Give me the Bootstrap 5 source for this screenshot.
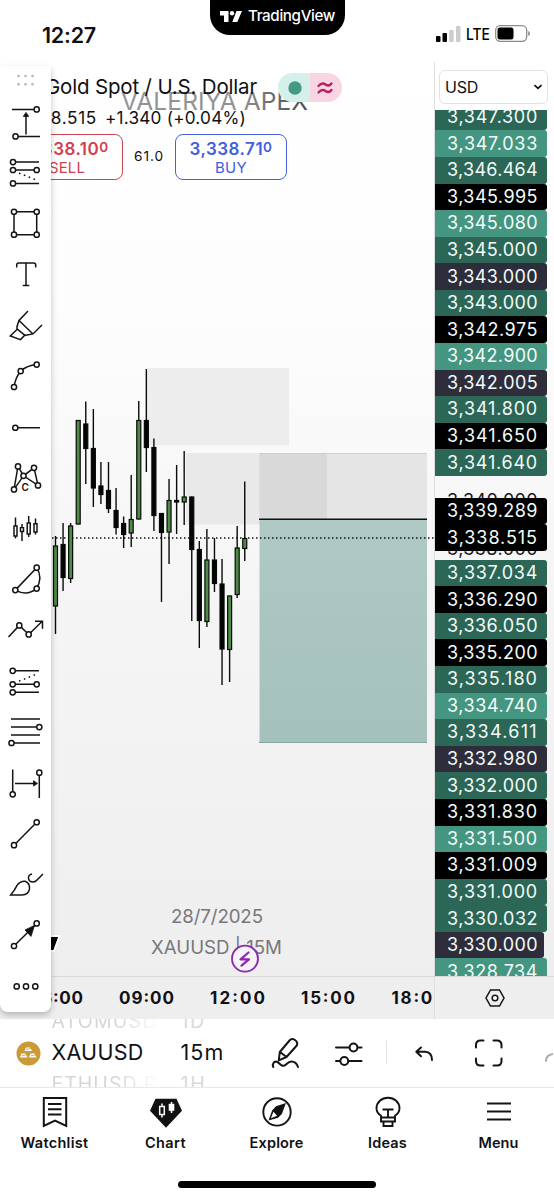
<!DOCTYPE html>
<html lang="en">
<head>
<meta charset="utf-8">
<meta name="viewport" content="width=device-width, initial-scale=1">
<title>XAUUSD chart</title>
<link href="https://cdn.jsdelivr.net/npm/bootstrap@5.3.0/dist/css/bootstrap.min.css" rel="stylesheet">
<style>
body{font-family:Inter,"Liberation Sans",sans-serif;color:#101014;background:#fff;width:554px;height:1199px;overflow:hidden;line-height:1}
svg{display:block;flex:none}
.ln{fill:none;stroke:#141416;stroke-width:1.5}
.ln circle,.ln .box{fill:#fff}
span[data-w]{display:inline-block;white-space:nowrap}
.status{height:62px;padding:5px 23px 0 42px}
.clock{font-size:21.5px;font-weight:600;width:168px;margin-top:-2px}
.notch{width:135px;height:35px;border-radius:0 0 20px 20px;background:#000;color:#fff;font-size:15.2px;font-weight:500;gap:6px;margin-top:-5px;padding-bottom:3px}
.signal{gap:5px;padding-top:5px}
.net{font-size:15.5px;font-weight:500;width:24px}
.workspace{height:957px;background:linear-gradient(#fff 0,#fdfdfd 25%,#f5f5f5 55%,#efefef 90%,#eee)}
.pane{width:434px;height:957px}
.canvas{position:absolute;left:0;top:0}
.legend{padding:10px 0 0 45px;height:130px}
.name{font-size:20.5px;height:30px}
.pill{width:64px;height:29px;border-radius:15px;background:linear-gradient(90deg,#d5f0ea 50%,#f8d5e2 50%);margin-left:21px}
.quote{font-size:17.2px;height:31px;margin-left:-33px;gap:8px}
.quotes{margin-left:-34px;gap:11px;margin-top:1px}
.deal{width:112px;height:46px;border:1.5px solid #cf4650;border-radius:8px;color:#d2404b;font-size:15px;line-height:19px;background:#fff;padding:3px 0 0;margin:0}
.deal b{font-size:17px;font-weight:600;display:block;height:18px;line-height:18px}
.tick{font-size:13.5px;position:relative;top:-3px}
.deal.buy{border-color:#4463dc;color:#3f60dd}
.spread{font-size:13.7px;width:30px}
.axis{width:120px;height:957px;border-left:1px solid #dedede}
.unit{height:34px;width:109px;margin:8px 0 0 4px;border:1px solid #e2e2e6;border-radius:6px;background:#fff;font-size:16px;padding:0 4px 0 5px}
.ladder{height:866px;margin-top:6px;overflow:hidden}
.rung{height:26.58px;width:112px;border-radius:0 3px 3px 0;color:#f4fbf9;font-size:18px;padding-left:12px;display:flex;align-items:center;position:relative}
.rung:first-child{margin-top:-6.2px}
.gd{background:#2b6656}.gl{background:#449681}.bk{background:#000}.nv{background:#2d2d3b}
.short{width:109px}
.free{color:#17171b;background:none;z-index:0}
.over{z-index:1}
.gear{height:43px;border-top:1px solid #d8d8d8}
.tools{position:absolute;left:0;top:4px;width:51px;height:946px;background:#fff;border-radius:0 0 8px 8px;box-shadow:0 3px 6px rgba(0,0,0,.24);z-index:3}
.bar{height:69px;border-bottom:1px solid #e8e8e8;padding-left:15.5px;overflow:hidden}
.wheel{height:69px;display:flex;flex-direction:column;align-items:flex-start;justify-content:center;overflow:hidden;font-size:21.5px;gap:11px;width:83px;padding-left:23px}
.wheel i{font-style:normal;font-size:19.5px;color:#d9d9d9;white-space:nowrap}
.wheel.sym{width:106px;margin-left:11px;padding-left:0}
.sym i{background:linear-gradient(90deg,#d4d4d4 60%,#fff);-webkit-background-clip:text;color:transparent}
.tabs a{width:20%;font-size:14.5px;font-weight:600;color:#101014;text-decoration:none;gap:8px}
.tabs{height:93px;padding-top:8px;margin-left:-1px}
.home{width:198px;height:7px;border-radius:4px;background:#000}
</style>
<script src="https://cdn.jsdelivr.net/npm/bootstrap@5.3.0/dist/js/bootstrap.bundle.min.js"></script>
</head>
<body>
<header class="status d-flex align-items-start">
  <div class="clock pt-3 mt-1"><span data-w="54">12:27</span></div>
  <div class="notch d-flex align-items-center justify-content-center">
    <svg width="22" height="11" viewBox="0 0 22 11" fill="#fff"><path d="M0 0h8.500v11H4V4.400H0zM16.500 0H22l-4.700 11h-5z"/><circle cx="12" cy="2.200" r="2.200"/></svg>
    <span data-w="87">TradingView</span>
  </div>
  <div class="signal d-flex align-items-center ms-auto pt-3 mt-1">
    <svg width="25" height="16" viewBox="0 0 25 16"><rect y="10" width="4.500" height="6" rx="1"/><rect x="6.500" y="7" width="4.500" height="9" rx="1"/><rect x="13.200" y="4" width="4.500" height="12" rx="1" fill="#ccc"/><rect x="20" width="4.500" height="16" rx="1" fill="#ccc"/></svg>
    <svg class="net" width="24" height="16" viewBox="0 0 24 16"><text x="0" y="14" font-size="16.500" textLength="24" lengthAdjust="spacingAndGlyphs">LTE</text></svg>
    <svg width="36" height="17" viewBox="0 0 36 17"><rect x=".7" y=".7" width="31" height="15.600" rx="4.500" fill="none" stroke="#8c8c8c" stroke-width="1.300"/><rect x="2.500" y="2.500" width="16" height="12" rx="2.500"/><path d="M33.200 6v5q1.800-.8 1.800-2.500T33.200 6" fill="#888"/></svg>
  </div>
</header>

<main class="workspace d-flex position-relative">
  <section class="pane position-relative overflow-hidden">
    <svg class="canvas" id="chart" width="434" height="957" viewBox="0 62 434 957" font-family="Inter">
      <defs><linearGradient id="wm"><stop offset=".64" stop-color="#929295"/><stop offset=".8" stop-color="#6d6d71"/><stop offset="1" stop-color="#4b4b50"/></linearGradient>
      <linearGradient id="gain" x2="0" y2="1"><stop stop-color="#afc9c5"/><stop offset="1" stop-color="#a5c1bb"/></linearGradient></defs>
      <path d="M147 368h142v77.500H147z" fill="#ededed"/>
      <path d="M186 453h141v71.500H186z" fill="#e9e9e9"/>
      <path d="M259.500 453H427v66H259.500z" fill="#e5e5e6"/>
      <path d="M259.500 453H327v66h-67.500z" fill="#d9d9da"/>
      <path d="M259.500 453.500H427" stroke="#cfcfcf"/>
      <path d="M259.500 519H427v223.500H259.500z" fill="url(#gain)"/><path d="M259 742.500h168" stroke="#86a5a0"/>
      <path d="M52 538h382" stroke="#111" stroke-width="1.300" stroke-dasharray="1.500 2.500"/>
      <path d="M259 519.200h168" stroke="#111" stroke-width="1.600"/>
      <g id="candles"></g>
      <g fill="#77777b" font-size="18.700"><text x="171" y="922.500" textLength="92">28/7/2025</text><text x="151" y="954" textLength="131">XAUUSD | 15M</text></g>
      <circle cx="245" cy="958.700" r="13" fill="#f6f3f7" stroke="#8a2bab" stroke-width="1.800"/>
      <path d="M248.500 952.500l-8 6.800h8.500l-7.500 6.400" fill="none" stroke="#8a2bab" stroke-width="2.200" stroke-linejoin="round" stroke-linecap="round"/>
      <path d="M45 936h14.500l-5.500 15h-9z" stroke="#fff" stroke-width="2"/>
      <path d="M0 976.500h434" stroke="#d8d8d8"/>
      <g font-size="17" font-weight="700" fill="#111116"><text x="29" y="1003.500" textLength="54">06:00</text><text x="119" y="1003.500" textLength="55">09:00</text><text x="210" y="1003.500" textLength="55">12:00</text><text x="301" y="1003.500" textLength="54">15:00</text><text x="391.500" y="1003.500" textLength="54">18:00</text></g>
      <text x="121" y="110" font-size="24.500" textLength="187" fill="url(#wm)">VALERIYA APEX</text>
    </svg>
    <div class="legend position-relative">
      <div class="name d-flex align-items-center"><span data-w="212">Gold Spot / U.S. Dollar</span>
        <div class="pill d-flex align-items-center"><svg width="64" height="29"><circle cx="17" cy="15" r="6.700" fill="#439a84"/><path d="M40.500 13q3.500-4 7-1.500t6-1M40.500 19.500q3.500-4 7-1.500t6-1" fill="none" stroke="#b6245f" stroke-width="2.300" stroke-linecap="round"/></svg></div>
      </div>
      <div class="quote d-flex align-items-center"><span data-w="85">3,338.515</span><span data-w="141">+1.340 (+0.04%)</span></div>
      <div class="quotes d-flex align-items-center">
        <button class="deal text-center"><b><span data-w="83">3,338.10<span class="tick">0</span></span></b><span data-w="36">SELL</span></button>
        <span class="spread" data-w="30">61.0</span>
        <button class="deal buy text-center"><b><span data-w="83">3,338.71<span class="tick">0</span></span></b><span data-w="32">BUY</span></button>
      </div>
    </div>
  </section>

  <aside class="axis d-flex flex-column">
    <div class="unit d-flex align-items-center justify-content-between"><span data-w="33">USD</span><svg width="10" height="6" viewBox="0 0 10 6"><path d="M1.500 1.200L5 4.300l3.500-3.100" fill="none" stroke="#111" stroke-width="1.700"/></svg></div>
    <div class="ladder" id="ladder"></div>
    <div class="gear d-flex align-items-center justify-content-center"><svg width="20" height="18" viewBox="0 0 20 18" class="ln"><path d="M5.500 1h9L19 9l-4.500 8h-9L1 9z"/><circle cx="10" cy="9" r="2.800"/></svg></div>
  </aside>

  <nav class="tools" id="tools">
    <svg width="51" height="30.570" viewBox="0 66 51 30.570" fill="#b5b5b8"><g id="grip"><circle cx="18.500" cy="76" r="1.300"/><circle cx="25.500" cy="76" r="1.300"/><circle cx="32.500" cy="76" r="1.300"/></g><use href="#grip" y="8.300"/></svg>
  </nav>
</main>

<div class="bar d-flex align-items-center">
  <svg width="25" height="25" viewBox="0 0 25 25"><circle cx="12.500" cy="12.500" r="12" fill="#c99a35"/><g fill="#fff"><path d="M10 6.500h4l2 3.500H8.500zM5.500 12.500h4l2 4H4zM14.500 12.500h4l2 4H13z"/></g><path d="M10 8.500l4.500-1M5.500 14.800l4.500-1M15 14.800l4.500-1" stroke="#c99a35" stroke-width=".8"/></svg>
  <div class="wheel sym"><i><span data-w="106">ATOMUSD</span></i><span data-w="92">XAUUSD</span><i><span data-w="106">ETHUSD P</span></i></div>
  <div class="wheel"><i><span data-w="25">1D</span></i><span data-w="44">15m</span><i><span data-w="26">1H</span></i></div>
  <svg width="312" height="69" viewBox="242 1019 312 69" class="ln" stroke-linecap="round" stroke-linejoin="round">
    <g style="stroke-width:2">
      <path d="M279.800 1060.300l1-8.300 9.700-11.500q2.200-2.600 5.500-.5t1.800 5.500L287.500 1057zM281 1052l6.500 5M274.300 1067c-1.500-3.500 1-6 3.500-5.200 3 1 4 4.500 7 4 3-.6 3.700-4.300 7.500-4.300 3.500 0 5.700 2.300 6.700 5.500"/>
      <path d="M337 1047.500h13.500M358.500 1047.500h4M337 1061h4M349.500 1061h13"/><circle cx="354.500" cy="1047.500" r="3.900"/><circle cx="345.300" cy="1061" r="3.900"/>
      <path d="M422 1047.500l-4.700 4.300 4.700 4.500M418 1051.800h8q7 .5 7 8.200"/>
      <path d="M477 1047.500v-2.500q0-4.500 4.500-4.500h3M494.500 1040.500h3.500q4.500 0 4.500 4.500v2.500M502.500 1058.500v2.500q0 4.500-4.500 4.500h-3.500M484.500 1065.500h-3q-4.500 0-4.500-4.500v-2.500"/>
    </g>
    <path d="M387.500 1041v23" style="stroke:#e2e2e2;stroke-width:1"/>
    <path d="M547 1061q0-6 7-7" style="stroke:#aaa;stroke-width:2"/>
  </svg>
</div>

<footer>
  <nav class="tabs d-flex">
    <a class="d-flex flex-column align-items-center" href="#"><svg width="32" height="32" viewBox="39 1096 32 32" class="ln"><path style="stroke-width:2" d="M43.800 1098h22.400v28l-11.200-5.500-11.200 5.500zM48 1104h13.500M48 1109.200h13.500M48 1114.500h13.500"/></svg><span data-w="68">Watchlist</span></a>
    <a class="d-flex flex-column align-items-center" href="#"><svg width="32" height="32" viewBox="150.500 1096 32 32"><path d="M156 1098.700h21l5.500 12-16 17-16-17z" fill="#111"/><path d="M162.500 1103.500v3m0 8v3M172 1102v11" stroke="#fff" stroke-width="1.500"/><path d="M160.200 1106.500h4.600v8h-4.600z" fill="#111" stroke="#fff" stroke-width="1.500"/><path d="M169.200 1103.800h5.600v7h-5.600z" fill="#fff"/></svg><span data-w="41">Chart</span></a>
    <a class="d-flex flex-column align-items-center" href="#"><svg width="32" height="32" viewBox="260.300 1096 32 32" class="ln"><circle cx="276.300" cy="1111.900" r="13.700" style="stroke-width:1.900"/><path d="M284 1104.200l-3.500 9.500-3.500 3.500-8 2.200 3.200-8.700 3.500-3.700z" style="fill:#111"/><path d="M270.200 1118.300l2.500-6.500 3.700 4z" style="fill:#fff;stroke:none"/></svg><span data-w="54">Explore</span></a>
    <a class="d-flex flex-column align-items-center" href="#"><svg width="32" height="32" viewBox="371.500 1096 32 32" class="ln"><path style="stroke-width:1.900" d="M380.500 1117.500v-1.800q-4.500-3-4.500-7.500a11.500 10.500 0 0 1 23 0q0 4.500-4.500 7.500v1.800zM380.500 1117.500v4h14v-4M383 1122v4h9v-4M382 1109.500h11M387.500 1109.500v8"/></svg><span data-w="39">Ideas</span></a>
    <a class="d-flex flex-column align-items-center" href="#"><svg width="32" height="32" viewBox="482 1096 32 32" class="ln"><path style="stroke-width:1.900" d="M486 1103.500h24M486 1111.500h24M486 1119.500h24"/></svg><span data-w="40">Menu</span></a>
  </nav>
  <div class="home mx-auto"></div>
</footer>

<script>
// high, body top, body bottom, low, rising
const candles=[[536,545.5,606.500,634,1],[523,544,578,591,0],[523,525.5,579,583,1],[420,420,524.500,524.500,1],[401.500,423.500,449,484,0],[409,448,488.500,507,0],[462,485.500,495,504,0],[462,490,509,513,0],[488,510,528,534.500,0],[516.500,523,535,548,0],[475,519,533.500,547,1],[401,420,519.500,519.500,1],[369,420,448,472,0],[438.500,447,516,531,0],[513,513,533,602,0],[479,500,532.500,564,1],[465,500,502.500,534,0],[451,496.500,502.500,525,1],[496.500,496.500,550,621,0],[541,549,621,648,0],[529,559.500,622,627,1],[538,559.500,584,592,0],[559,583.500,649.500,685,0],[595.500,595.500,650,682,1],[526,547.500,595,598,1],[481.500,538,549,561,1]];
document.getElementById('candles').innerHTML=candles.map(([h,t,b,l,up],i)=>{
  const x=55.5+i*7.57;
  return `<path d="M${x} ${h}V${l}" stroke="#0a0a0a" stroke-width="1.4"/><rect x="${x-2}" y="${t+.5}" width="4" height="${b-t-1}" fill="${up?'#4f8a46':'#050505'}" stroke="#050a05" stroke-width="1.200"/>`}).join('');

const rungs='gd 347.300,gl 347.033,gd 346.464,bk 345.995,gl 345.080,gd 345.000,nv 343.000,gd 343.000,bk 342.975,gl 342.900,nv 342.005,gd 341.800,bk 341.650,gd 341.640,f1 340.000,bk 339.289,bk 338.515,f2 338.000,gd 337.034,bk 336.290,gd 336.050,bk 335.200,gd 335.180,gl 334.740,gd 334.611,nv 332.980,gd 332.000,bk 331.830,gl 331.500,bk 331.009,gd 331.000,gd 330.032,sh 330.000,gl 328.734';
document.getElementById('ladder').innerHTML=rungs.split(',').map(r=>{
  const [k,p]=r.split(' ');
  const cls={f1:'free',f2:'free',sh:'nv short'}[k]||k+' over';
  const m={f1:'margin:11.500px 0 -16.200px',f2:'margin:-15.300px 0 -2.500px'}[k]||'';
  return `<div class="rung ${cls}" style="${m}"><span data-w="91">3,${p}</span></div>`}).join('');

// drawing tools, each centred on y = 0
const c=(x,y)=>`<circle cx="${x}" cy="${y}" r="2.6"/>`, p=(d,a='')=>`<path d="${d}" ${a}/>`;
const dots='stroke-dasharray="1.600 3.600"', solid='fill="#111" stroke-width=".8"';
const tools=[
 p('M12-13h22M18 14h22M26 12V-8')+p('M23.300-6l2.700-4 2.700 4z',solid)+c(36.7,-13)+c(15.5,14),
 p('M13-10.400h26M13-2.400h24M13 11h26')+p('M19 .7l19 7.500',dots)+c(13,-10.4)+c(13,-2.4)+c(36.7,-2.4)+c(13,11),
 p('M14-11.700h22.700v23H14z')+c(14,-11.7)+c(36.7,-11.7)+c(14,11.3)+c(36.7,11.3),
 p('M16.700-7v-2.500q0-2 2-2h15q2 0 2 2V-7M26-11.500V11M22.700 11h6.600'),
 p('M28-14.500L19-5l-2 6v3L10.300 10.500l10.200 3.700 4-4.200 8.500-1.500L42-.5M19-5L33 8.500M17 3.500l8 6.500'),
 p('M14 10.600Q15.500 1 20.700-5.400 27-11 36.700-11.900')+c(14,10.6)+c(20.7,-5.4)+c(36.7,-11.9),
 p('M18 .3h22')+c(15.3,.3),
 p('M18-12L14 11 23.500-2.600zM34-10.600L38 7 23.500-2.600z')+c(18,-12)+c(34,-10.6)+c(23.500,-2.6)+c(14,11)+c(38,7)+'<text x="21.500" y="13" font-size="10" font-weight="600" fill="#111" stroke="none">C</text>',
 p('M15.500-11V10M22-4.500V12.500M28.700-12.500V8.500M35.500-10V6')+p('M14-2.500h3v10h-3zM20.500-.8h3v4h-3zM27.200-5.500h3v11h-3zM34-4.800h3V3.500h-3z','class="box"'),
 p('M15.300 10.700L36.700-11.800Q43-2 36.700 9.200 27 17 15.300 10.700')+c(36.7,-11.8)+c(15.3,10.7)+c(36.7,9.2),
 p('M8.500 6.500L19.300-5l9.400 9L42-9M35-9.200h7.500v7.500')+c(19.3,-5)+c(28.7,4),
 p('M13-10.600h26M13 2.900h24M13 10.900h26')+p('M19-.3l19-7.500',dots)+c(12.7,-10.6)+c(12.7,2.9)+c(36.7,2.9)+c(12.7,10.9),
 p('M11-13.400h29M11-5.400h28M11 2.600h29M11 10.600h29')+c(39.3,-5.4)+c(11.5,10.6),
 p('M12.700-14V11M39.300-10v24.500M15 0h20')+p('M33.500-2.700L37.500 0l-4 2.700z',solid)+c(12.7,10.9)+c(39.3,-10.8),
 p('M14 10.800L36.700-12.200')+c(14,10.8)+c(36.7,-12.2),
 p('M10.700 10.500Q15 5.500 17 1 20-3.500 25-3.200 30-1.500 29.500 4.500 28.500 10.500 22 10.500zM32-10.500q-4 1-3.500 4.500T33-2.500q2.500 0 4-2L43-10.500'),
 p('M14 10.600L36.700-12')+p('M34.500-10L25-5.500l6 6.500z',solid)+c(14,10.6)+c(36.7,-12),
 c(16.7,0)+c(26,0)+c(35.3,0)];
document.getElementById('tools').insertAdjacentHTML('beforeend',tools.map(t=>`<svg class="ln" width="51" height="50.870" viewBox="0 -25.430 51 50.870">${t}</svg>`).join(''));

document.querySelectorAll('span[data-w]').forEach(s=>{
  const r=document.createRange(); r.selectNodeContents(s);
  s.style.letterSpacing=(s.dataset.w-r.getBoundingClientRect().width)/s.textContent.length+'px';
});
</script>
</body>
</html>
